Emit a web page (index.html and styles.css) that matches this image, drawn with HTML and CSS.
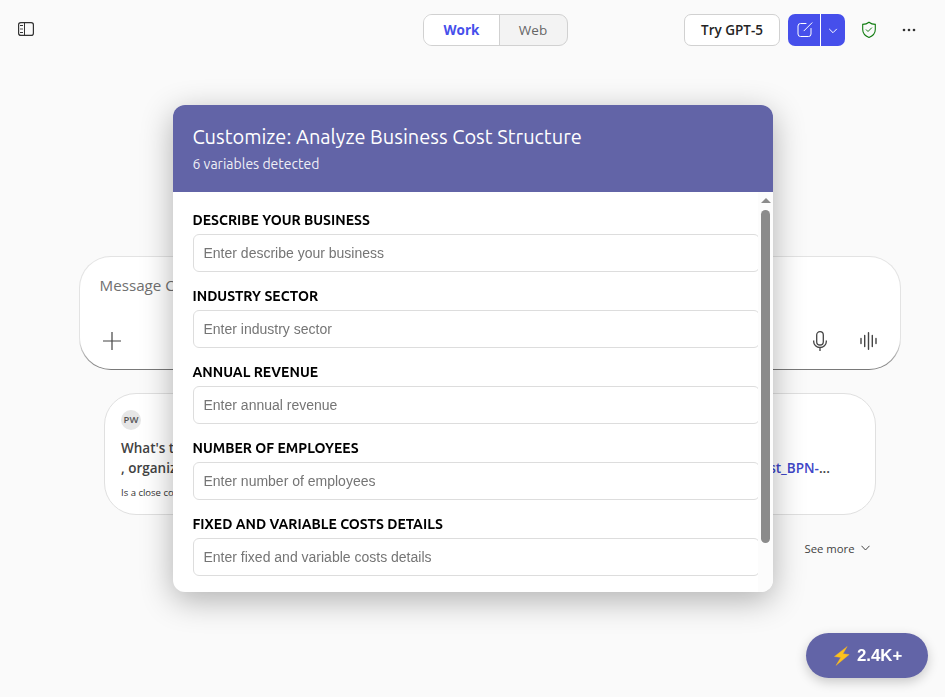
FILE: index.html
```html
<!DOCTYPE html>
<html lang="en">
<head>
<meta charset="utf-8">
<title>Copilot</title>
<link rel="stylesheet" href="styles.css">
</head>
<body>
<header class="topbar">
  <svg class="panel-icon" width="16" height="14" viewBox="0 0 16 14" fill="none" stroke="#333"><rect x=".6" y=".6" width="14.8" height="12.8" rx="2.2" stroke-width="1.2"/><path d="M6.500.5v13"/><path d="M2 3.500h3M2 10.500h3"/><path d="M2 7h3" stroke="#888" stroke-width="1.500"/></svg>
  <div class="switch"><span class="tab active">Work</span><span class="tab">Web</span></div>
  <div class="actions">
    <button class="try">Try GPT-5</button>
    <div class="compose">
      <span class="new"><svg width="16" height="16" viewBox="0 0 16 16" fill="none" stroke="#fff" stroke-linecap="round"><path d="M9 1.500H3.500a2.500 2.500 0 0 0-2.500 2.500v8A2.500 2.500 0 0 0 3.500 14.500h8a2.500 2.500 0 0 0 2.500-2.500V6.500M7 8.800 15 .8"/></svg></span>
      <span class="drop"><svg width="10" height="6" viewBox="0 0 10 6" fill="none" stroke="#fff"><path d="m1.200.9 3.800 3.800L8.800.9"/></svg></span>
    </div>
    <svg class="shield" width="16" height="18" viewBox="0 0 16 18" fill="none" stroke="#107c10" stroke-width="1.1"><path d="M8 1.200c1.800 1.400 3.800 2.100 6.300 2.200v5c0 3.600-2.200 6.300-6.300 8-4.100-1.700-6.300-4.400-6.300-8v-5C4.200 3.300 6.200 2.600 8 1.200Z"/><path d="m5 8.500 2 2 3.900-3.900" stroke-width="1"/></svg>
    <svg width="14" height="4" viewBox="0 0 14 4" fill="#333"><circle cx="2" cy="2" r="1.300"/><circle cx="7" cy="2" r="1.300"/><circle cx="12" cy="2" r="1.300"/></svg>
  </div>
</header>
<main>
  <section class="composer">
    <div class="message">Message C</div>
    <div class="tools">
      <svg width="18" height="18" viewBox="0 0 18 18" fill="none" stroke="#444" stroke-width="1.200"><path d="M9 0v18M0 9h18"/></svg>
      <div class="voice">
        <svg width="14" height="20" viewBox="0 0 14 20" fill="none" stroke="#444" stroke-width="1.300"><rect x="3.700" y=".7" width="6.600" height="13.300" rx="3.300"/><path d="M.7 9.500v1.200a6.300 5.800 0 0 0 12.600 0V9.500M7 16.500V20"/></svg>
        <svg width="17" height="18" viewBox="0 0 17 18" fill="none" stroke="#444" stroke-width="1.400" stroke-linecap="round"><path d="M1 6.500v5M4.700 3.500v11M8.500.8v16.400M12.300 3.500v11M16 6.500v5"/></svg>
      </div>
    </div>
  </section>
  <section class="card">
    <div class="avatar">PW</div>
    <div class="headline"><div>What's t<br>, organiz</div><div class="file"><b>st_BPN-</b>...</div></div>
    <div class="caption">Is a close co</div>
  </section>
  <div class="more">See more <svg width="9" height="6" viewBox="0 0 9 6" fill="none" stroke="#444"><path d="m.5.800 4 4.200 4-4.200"/></svg></div>
</main>
<button class="credits"><svg width="20" height="22" viewBox="0 0 20 22"><path d="M15.200 1.500 2.400 11.500l6.300.9-4.700 8L17.200 9.600l-6.200-.9Z" fill="#fcc21b" stroke="#f5b02a" stroke-width=".4"/></svg><span>2.4K+</span></button>
<div class="overlay">
  <div class="modal">
    <div class="modal-head"><h1>Customize: Analyze Business Cost Structure</h1><p>6 variables detected</p></div>
    <div class="modal-body">
      <form class="fields">
        <label><span>DESCRIBE YOUR BUSINESS</span><input placeholder="Enter describe your business"></label>
        <label><span>INDUSTRY SECTOR</span><input placeholder="Enter industry sector"></label>
        <label><span>ANNUAL REVENUE</span><input placeholder="Enter annual revenue"></label>
        <label><span>NUMBER OF EMPLOYEES</span><input placeholder="Enter number of employees"></label>
        <label><span>FIXED AND VARIABLE COSTS DETAILS</span><input placeholder="Enter fixed and variable costs details"></label>
      </form>
      <div class="scrollbar"><i class="up"></i><i class="thumb"></i></div>
    </div>
  </div>
</div>
</body>
</html>
```
FILE: styles.css
```css
* { box-sizing: border-box; }
body { margin: 0; height: 697px; overflow: hidden; background: #fafafa; color: #333; font-family: "Open Sans", "Noto Sans", sans-serif; }
svg { display: block; flex: none; }
button { font-family: inherit; }
.topbar { display: flex; height: 60px; align-items: center; padding: 0 29px 0 18px; }
.panel-icon { margin-bottom: 2px; }
.switch { display: flex; width: 145px; height: 32px; margin-left: 389px; border: 1px solid #d1d1d1; border-radius: 9px; overflow: hidden; background: #f3f3f3; }
.tab { flex: 1; display: flex; align-items: center; justify-content: center; padding-right: 1px; font-size: 13.5px; font-weight: 500; color: #666; }
.active { flex: 0 0 76px; padding: 0; border-right: 1px solid #d1d1d1; background: #fff; color: #464feb; font-weight: 700; }
.actions { display: flex; align-items: center; margin-left: auto; }
.try { width: 96px; height: 32px; padding: 0; border: 1px solid #d1d1d1; border-radius: 7px; background: #fff; font-size: 13.5px; font-weight: 600; color: #242424; }
.compose { display: flex; width: 57px; height: 32px; margin: 0 16px 0 8px; border-radius: 7px; background: #464feb; overflow: hidden; }
.new, .drop { display: flex; align-items: center; justify-content: center; }
.new { width: 33px; padding-left: 2px; border-right: 1px solid #fff; }
.drop { width: 24px; padding-top: 1px; }
.shield { margin-right: 25px; }
main { width: 822px; margin: 196px 0 0 79px; }
.composer { display: flex; flex-direction: column; justify-content: space-between; height: 114px; padding: 17px 23.5px 18px 19.5px; border: 1px solid transparent; border-radius: 32px; background: linear-gradient(#fff, #fff) padding-box, linear-gradient(to top, #777 0, #e3e3e3 30px) border-box; }
.message { font-size: 15.200px; line-height: 22px; color: #707070; }
.tools { display: flex; justify-content: space-between; align-items: center; padding-left: 3px; }
.voice { display: flex; align-items: center; gap: 32.5px; }
.card { width: 772px; height: 122px; margin: 23px 0 0 25px; padding: 16px; border: 1px solid #e0e0e0; border-radius: 32px; background: #fff; }
.avatar { width: 20px; height: 20px; border-radius: 50%; background: #e6e6e6; font-size: 9.5px; line-height: 20px; font-weight: 600; text-align: center; color: #555; }
.headline { display: flex; justify-content: space-between; align-items: flex-end; margin-top: 8px; font-size: 13.5px; line-height: 20px; font-weight: 600; color: #424242; }
.file { padding-right: 29px; }
.file b { color: #4046c8; font-weight: 600; }
.caption { margin-top: 7px; font-size: 9.5px; line-height: 16px; }
.more { display: flex; align-items: center; justify-content: flex-end; gap: 6px; height: 20px; margin: 23px 31.5px 0 0; font-size: 11.300px; color: #424242; }
.credits { position: fixed; left: 806px; top: 633px; display: flex; align-items: center; gap: 5px; width: 122px; height: 45px; padding: 0 0 0 26px; border: 0; border-radius: 23px; background: #6264a7; box-shadow: 0 4px 12px #0003; color: #fff; font: 700 16.800px "Liberation Sans", sans-serif; }
.overlay { position: fixed; inset: 0; display: flex; align-items: center; justify-content: center; }
.modal { width: 600px; height: 487px; border-radius: 12px; overflow: hidden; background: #fff; box-shadow: 0 8px 32px #0000004d; font-family: Ubuntu, "Noto Sans", sans-serif; }
.modal-head { height: 87px; padding: 20px; background: #6264a7; color: #fff; }
h1 { margin: 0; font-size: 20px; line-height: 24px; font-weight: 400; white-space: nowrap; }
.modal-head p { margin: 5px 0 0; font-size: 14px; line-height: 20px; font-weight: 400; opacity: .9; }
.modal-body { display: flex; height: 400px; overflow: hidden; }
.fields { flex: 1; padding: 20px 0 0 20px; overflow: hidden; }
.fields label { display: block; width: 567px; height: 76px; }
.fields span { display: block; height: 22px; font-size: 14px; line-height: 17px; font-weight: 600; color: #000; }
.fields input { display: block; width: 100%; height: 38px; padding: 0 10px; border: 1px solid #ddd; border-radius: 6px; background: #fff; font: 14px "Liberation Sans", sans-serif; }
.scrollbar { display: flex; flex-direction: column; width: 15px; padding: 6px 2.5px 0 3.5px; background: #fcfcfc; }
.up { width: 0; height: 5px; border: solid transparent; border-width: 0 5px 5px; border-bottom-color: #8b8b8b; }
.thumb { width: 9px; height: 333px; margin-top: 7px; border-radius: 5px; background: #8b8b8b; }
```
